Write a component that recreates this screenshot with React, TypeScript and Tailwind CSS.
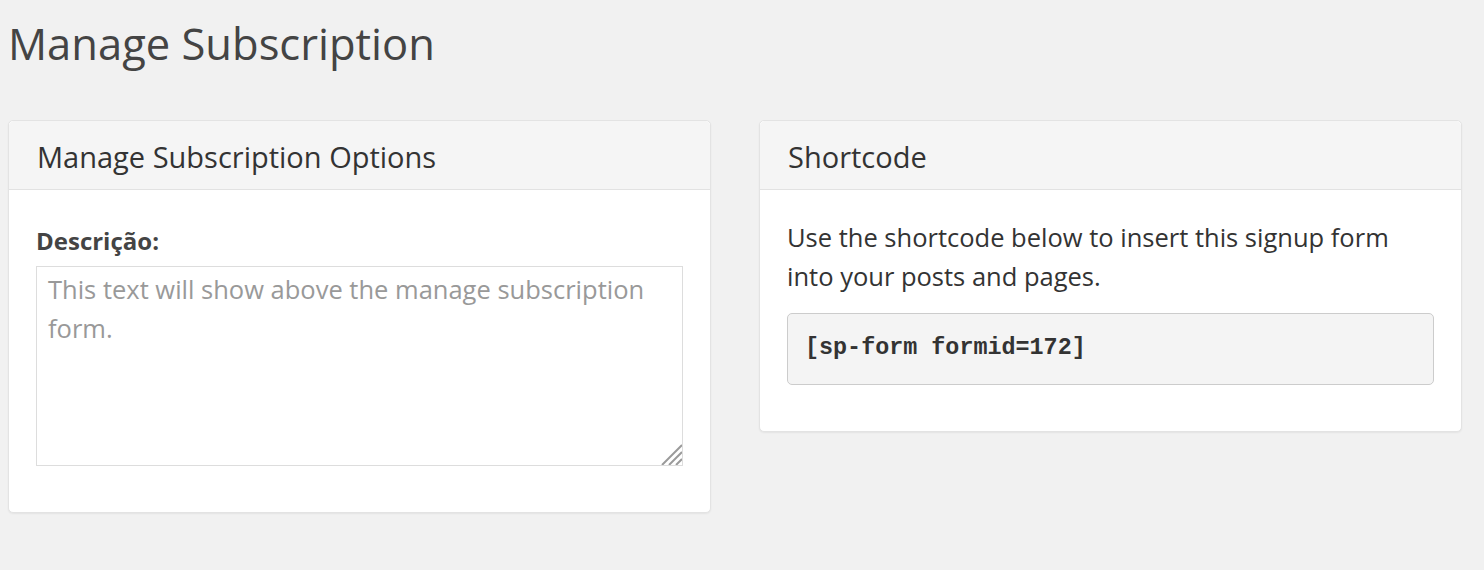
export default function App() {
  return (
    <div className="min-h-[570px] bg-[#f1f1f1] px-2 pt-[12px] font-['Open_Sans',sans-serif] text-[#444]">
      <h1 className="text-[43.5px] leading-[64px] text-[#444]">Manage Subscription</h1>

      <div className="mt-[44px] grid grid-cols-[703px_703px] gap-[48px] items-start">
        {/* left panel */}
        <div className="bg-white border border-[#e3e3e3] rounded-[5px] shadow-[0_1px_2px_rgba(0,0,0,0.06)]">
          <div className="h-[69px] flex items-center px-7 pt-[3px] bg-[#f5f5f5] border-b border-[#e2e2e2] rounded-t-[5px]">
            <h2 className="text-[29px] text-[#333]">Manage Subscription Options</h2>
          </div>
          <div className="px-[27px] pt-[35px] pb-[46px]">
            <label className="block text-[24px] font-bold text-[#444] leading-8 mb-[9px]">Descrição:</label>
            <div className="relative">
              <textarea
                placeholder="This text will show above the manage subscription form."
                className="block w-full h-[200px] resize-none border border-[#ddd] px-[11px] py-[3px] text-[25.5px] leading-[39px] text-[#444] placeholder:text-[#999] outline-none font-['Open_Sans',sans-serif]"
              />
              <svg className="absolute right-[1px] bottom-[1px] w-[22px] h-[22px] pointer-events-none" viewBox="0 0 22 22">
                <g stroke="#9a9a9a" strokeWidth="2">
                  <line x1="22" y1="2" x2="2" y2="22" />
                  <line x1="22" y1="9" x2="9" y2="22" />
                  <line x1="22" y1="16" x2="16" y2="22" />
                </g>
              </svg>
            </div>
          </div>
        </div>

        {/* right panel */}
        <div className="bg-white border border-[#e3e3e3] rounded-[5px] shadow-[0_1px_2px_rgba(0,0,0,0.06)]">
          <div className="h-[69px] flex items-center px-7 pt-[3px] bg-[#f5f5f5] border-b border-[#e2e2e2] rounded-t-[5px]">
            <h2 className="text-[29px] text-[#333]">Shortcode</h2>
          </div>
          <div className="px-[27px] pt-[28px] pb-[46px]">
            <p className="text-[25.5px] leading-[39px] text-[#333]">
              Use the shortcode below to insert this signup form
              <br />
              into your posts and pages.
            </p>
            <div className="mt-[17px] h-[72px] flex items-center px-[17px] bg-[#f4f4f4] border border-[#ccc] rounded-[5px]">
              <code className="font-['Liberation_Mono',monospace] font-bold text-[23.4px] text-[#333]">[sp-form formid=172]</code>
            </div>
          </div>
        </div>
      </div>
    </div>
  );
}
